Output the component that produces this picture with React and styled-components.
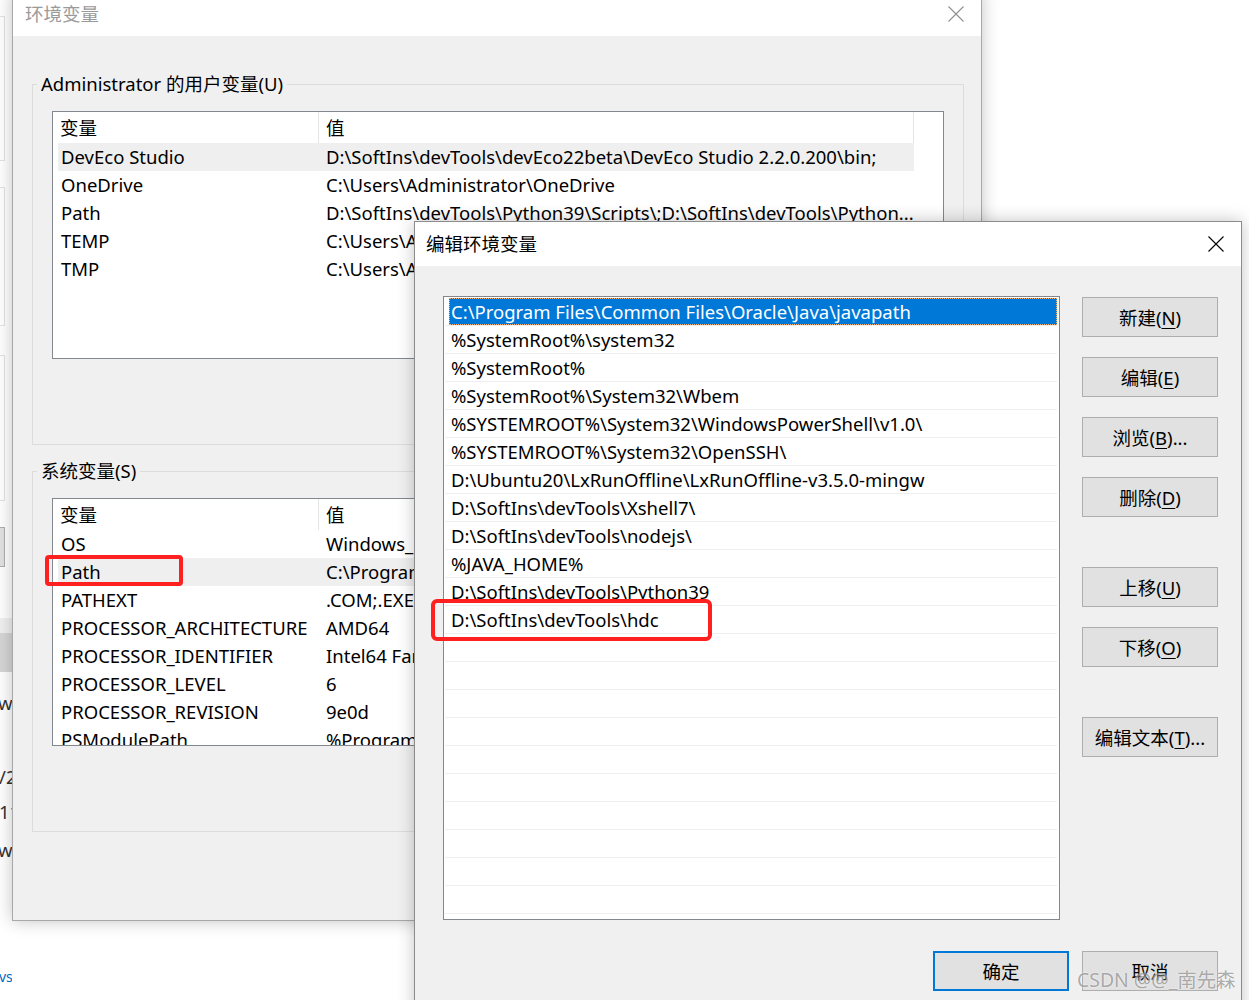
import React from "react";
import styled, { createGlobalStyle } from "styled-components";

const GlobalStyle = createGlobalStyle`
  html, body { margin: 0; padding: 0; background: #fff; }
  body {
    font-family: "Noto Sans", "Noto Sans CJK SC", sans-serif;
    font-size: 18.5px;
    color: #000;
  }
  * { box-sizing: border-box; }
`;

const Desktop = styled.div`
  position: relative;
  width: 1249px;
  height: 1000px;
  overflow: hidden;
  background: #fff;
`;

/* ---------- background window strip on the far left ---------- */
const BackStrip = styled.div`
  position: absolute;
  left: 0;
  top: 0;
  width: 12px;
  height: 1000px;
  overflow: hidden;
  display: flex;
  flex-direction: column;
`;
const StripBox = styled.div`
  flex: none;
  margin-top: ${(p) => p.$mt}px;
  height: ${(p) => p.$h}px;
  margin-left: -20px;
  width: 25px;
  border: 1px solid ${(p) => p.$border || "#e3e3e3"};
  background: ${(p) => p.$bg || "#fff"};
`;
const StripBar = styled.div`
  flex: none;
  height: ${(p) => p.$h}px;
  margin-top: ${(p) => p.$mt || 0}px;
  background: ${(p) => p.$bg};
`;
const StripText = styled.div`
  flex: none;
  margin-top: ${(p) => p.$mt}px;
  line-height: 20px;
  height: 20px;
  white-space: nowrap;
  margin-left: ${(p) => p.$ml || 0}px;
  color: ${(p) => p.$color || "#333"};
  font-size: ${(p) => p.$fs || 18.5}px;
`;

/* ---------- windows ---------- */
const Window = styled.div`
  position: absolute;
  left: ${(p) => p.$x}px;
  top: ${(p) => p.$y}px;
  width: ${(p) => p.$w}px;
  height: ${(p) => p.$h}px;
  border: 1px solid ${(p) => (p.$active ? "#8c8c8c" : "#a8a8a8")};
  background: #f0f0f0;
  box-shadow: 0 0 16px rgba(0, 0, 0, 0.24);
  display: flex;
  flex-direction: column;
`;
const TitleBar = styled.div`
  flex: none;
  height: 44px;
  background: #fff;
  display: flex;
  align-items: center;
  padding-left: ${(p) => p.$pl}px;
`;
const Title = styled.div`
  flex: 1;
  color: ${(p) => (p.$active ? "#000" : "#9a9a9a")};
  line-height: 24px;
  margin-top: -1px;
`;
const CloseBtn = styled.div`
  width: 50px;
  height: 44px;
  display: flex;
  align-items: center;
  justify-content: center;
  color: ${(p) => (p.$active ? "#000" : "#8f8f8f")};
`;

const CloseIcon = ({ active }) => (
  <CloseBtn $active={active}>
    <svg width="16" height="16" viewBox="0 0 16 16">
      <path d="M0.5 0.5 L15.5 15.5 M15.5 0.5 L0.5 15.5" stroke="currentColor" strokeWidth="1.1" fill="none" />
    </svg>
  </CloseBtn>
);

/* ---------- main dialog ---------- */
const MainBody = styled.div`
  flex: 1;
  padding: 36px 17px 0 19px;
  display: flex;
  flex-direction: column;
`;
const GroupBox = styled.fieldset`
  margin: ${(p) => p.$mt || 0}px 0 0 0;
  min-width: 0;
  border: 1px solid #dcdcdc;
  padding: 15px 18px 85px 4px;
`;
const Legend = styled.legend`
  padding: 0 4px;
  line-height: 24px;
  font-size: 18.5px;
`;
const ListView = styled.div`
  margin-left: 15px;
  width: 892px;
  height: 248px;
  border: 1px solid #828790;
  background: #fff;
  overflow: hidden;
`;
const HeaderRow = styled.div`
  display: grid;
  grid-template-columns: 266px 595px;
  width: 861px;
  height: 31px;
`;
const HeaderCell = styled.div`
  padding-left: 7px;
  line-height: 31px;
  border-right: 1px solid #e5e5e5;
  white-space: nowrap;
`;
const DataRow = styled.div`
  display: grid;
  grid-template-columns: 261px 595px;
  width: 856px;
  margin-left: 5px;
  height: 28px;
  background: ${(p) => (p.$selected ? "#efefef" : "transparent")};
`;
const Cell = styled.div`
  padding-left: ${(p) => (p.$first ? 3 : 7)}px;
  line-height: 28px;
  white-space: nowrap;
  overflow: hidden;
`;

/* ---------- edit dialog ---------- */
const EditBody = styled.div`
  flex: 1;
  padding: 30px 23px 0 28px;
  display: flex;
  flex-direction: column;
`;
const EditMain = styled.div`
  display: flex;
  align-items: flex-start;
`;
const PathList = styled.div`
  flex: none;
  width: 617px;
  height: 624px;
  border: 1px solid #828790;
  background: #fff;
  padding: 1px 2px 0 1px;
  overflow: hidden;
`;
const PathRow = styled.div`
  height: 28px;
  padding-left: 4px;
  border-bottom: 1px solid #efefef;
  display: flex;
`;
const PathText = styled.div`
  flex: 1;
  padding-left: 2px;
  line-height: 27px;
  white-space: nowrap;
  background: ${(p) => (p.$selected ? "#0078d7" : "transparent")};
  color: ${(p) => (p.$selected ? "#fff" : "#000")};
  outline: ${(p) => (p.$selected ? "1px dotted #f7b27a" : "none")};
  outline-offset: -1px;
`;
const ButtonCol = styled.div`
  margin-left: 22px;
  margin-top: 1px;
  display: flex;
  flex-direction: column;
  gap: 50px;
`;
const ButtonGroup = styled.div`
  display: flex;
  flex-direction: column;
  gap: 20px;
`;
const Button = styled.div`
  width: 136px;
  height: 40px;
  background: #e1e1e1;
  border: ${(p) => (p.$primary ? "2px solid #0078d7" : "1px solid #adadad")};
  display: flex;
  align-items: center;
  justify-content: center;
  font-size: 18.5px;
  white-space: nowrap;
  u { text-decoration-thickness: 1px; text-underline-offset: 3px; }
`;
const Footer = styled.div`
  margin-top: 31px;
  display: flex;
  justify-content: flex-end;
  gap: 13px;
`;

/* ---------- overlays ---------- */
const RedMark = styled.div`
  position: absolute;
  left: ${(p) => p.$x}px;
  top: ${(p) => p.$y}px;
  width: ${(p) => p.$w}px;
  height: ${(p) => p.$h}px;
  border: 4px solid #ff2020;
  border-radius: ${(p) => p.$r}px;
`;
const Watermark = styled.div`
  position: absolute;
  left: 1077px;
  top: 966px;
  font-size: 19.4px;
  line-height: 28px;
  white-space: nowrap;
  color: rgba(120, 120, 120, 0.62);
  text-shadow: 0 0 2px rgba(255, 255, 255, 0.9);
`;

const userVars = [
  ["DevEco Studio", "D:\\SoftIns\\devTools\\devEco22beta\\DevEco Studio 2.2.0.200\\bin;", true],
  ["OneDrive", "C:\\Users\\Administrator\\OneDrive"],
  ["Path", "D:\\SoftIns\\devTools\\Python39\\Scripts\\;D:\\SoftIns\\devTools\\Python..."],
  ["TEMP", "C:\\Users\\Administrator\\AppData\\Local\\Temp"],
  ["TMP", "C:\\Users\\Administrator\\AppData\\Local\\Temp"],
];

const sysVars = [
  ["OS", "Windows_NT"],
  ["Path", "C:\\Program Files\\Common Files\\Oracle\\Java\\javapath;C:\\Windows\\system32;...", true],
  ["PATHEXT", ".COM;.EXE;.BAT;.CMD;.VBS;.VBE;.JS;.JSE;.WSF;.WSH;.MSC"],
  ["PROCESSOR_ARCHITECTURE", "AMD64"],
  ["PROCESSOR_IDENTIFIER", "Intel64 Family 6 Model 158 Stepping 13, GenuineIntel"],
  ["PROCESSOR_LEVEL", "6"],
  ["PROCESSOR_REVISION", "9e0d"],
  ["PSModulePath", "%ProgramFiles%\\WindowsPowerShell\\Modules;C:\\Windows\\system32\\..."],
];

const paths = [
  "C:\\Program Files\\Common Files\\Oracle\\Java\\javapath",
  "%SystemRoot%\\system32",
  "%SystemRoot%",
  "%SystemRoot%\\System32\\Wbem",
  "%SYSTEMROOT%\\System32\\WindowsPowerShell\\v1.0\\",
  "%SYSTEMROOT%\\System32\\OpenSSH\\",
  "D:\\Ubuntu20\\LxRunOffline\\LxRunOffline-v3.5.0-mingw",
  "D:\\SoftIns\\devTools\\Xshell7\\",
  "D:\\SoftIns\\devTools\\nodejs\\",
  "%JAVA_HOME%",
  "D:\\SoftIns\\devTools\\Python39",
  "D:\\SoftIns\\devTools\\hdc",
];
const allPathRows = [...paths, ...Array(10).fill("")];

const VarList = ({ rows }) => (
  <ListView>
    <HeaderRow>
      <HeaderCell>变量</HeaderCell>
      <HeaderCell>值</HeaderCell>
    </HeaderRow>
    {rows.map(([name, value, sel]) => (
      <DataRow key={name} $selected={sel}>
        <Cell $first>{name}</Cell>
        <Cell>{value}</Cell>
      </DataRow>
    ))}
  </ListView>
);

const Btn = ({ label, keyChar, tail = "", primary }) => (
  <Button $primary={primary}>
    {label}
    {keyChar && (
      <>
        (<u>{keyChar}</u>){tail}
      </>
    )}
  </Button>
);

export default function App() {
  return (
    <Desktop>
      <GlobalStyle />
      <BackStrip>
        <StripBox $mt={16} $h={145} />
        <StripBox $mt={26} $h={139} />
        <StripBox $mt={29} $h={146} />
        <StripBox $mt={26} $h={40} $bg="#e1e1e1" $border="#adadad" />
        <StripBar $mt={51} $h={15} $bg="#f0f0f0" />
        <StripBar $h={39} $bg="#d6d6d6" />
        <StripText $mt={21} $ml={-2}>w</StripText>
        <StripText $mt={54} $ml={-1}>/2</StripText>
        <StripText $mt={15} $ml={-1}>11</StripText>
        <StripText $mt={18} $ml={-2}>w</StripText>
        <StripText $mt={107} $ml={-1} $fs={14} $color="#0067c0">vs</StripText>
      </BackStrip>

      <Window $x={12} $y={-9} $w={970} $h={930}>
        <TitleBar $pl={12}>
          <Title>环境变量</Title>
          <CloseIcon />
        </TitleBar>
        <MainBody>
          <GroupBox>
            <Legend>Administrator 的用户变量(U)</Legend>
            <VarList rows={userVars} />
          </GroupBox>
          <GroupBox $mt={14}>
            <Legend>系统变量(S)</Legend>
            <VarList rows={sysVars} />
          </GroupBox>
        </MainBody>
      </Window>

      <Window $x={414} $y={221} $w={828} $h={800} $active>
        <TitleBar $pl={11}>
          <Title $active>编辑环境变量</Title>
          <CloseIcon active />
        </TitleBar>
        <EditBody>
          <EditMain>
            <PathList>
              {allPathRows.map((p, i) => (
                <PathRow key={i}>
                  <PathText $selected={i === 0}>{p}</PathText>
                </PathRow>
              ))}
            </PathList>
            <ButtonCol>
              <ButtonGroup>
                <Btn label="新建" keyChar="N" />
                <Btn label="编辑" keyChar="E" />
                <Btn label="浏览" keyChar="B" tail="..." />
                <Btn label="删除" keyChar="D" />
              </ButtonGroup>
              <ButtonGroup>
                <Btn label="上移" keyChar="U" />
                <Btn label="下移" keyChar="O" />
              </ButtonGroup>
              <ButtonGroup>
                <Btn label="编辑文本" keyChar="T" tail="..." />
              </ButtonGroup>
            </ButtonCol>
          </EditMain>
          <Footer>
            <Btn label="确定" primary />
            <Btn label="取消" />
          </Footer>
        </EditBody>
      </Window>

      <RedMark $x={45} $y={555} $w={138} $h={31} $r={4} />
      <RedMark $x={431} $y={599} $w={281} $h={42} $r={6} />
      <Watermark>CSDN @@_南先森</Watermark>
    </Desktop>
  );
}
